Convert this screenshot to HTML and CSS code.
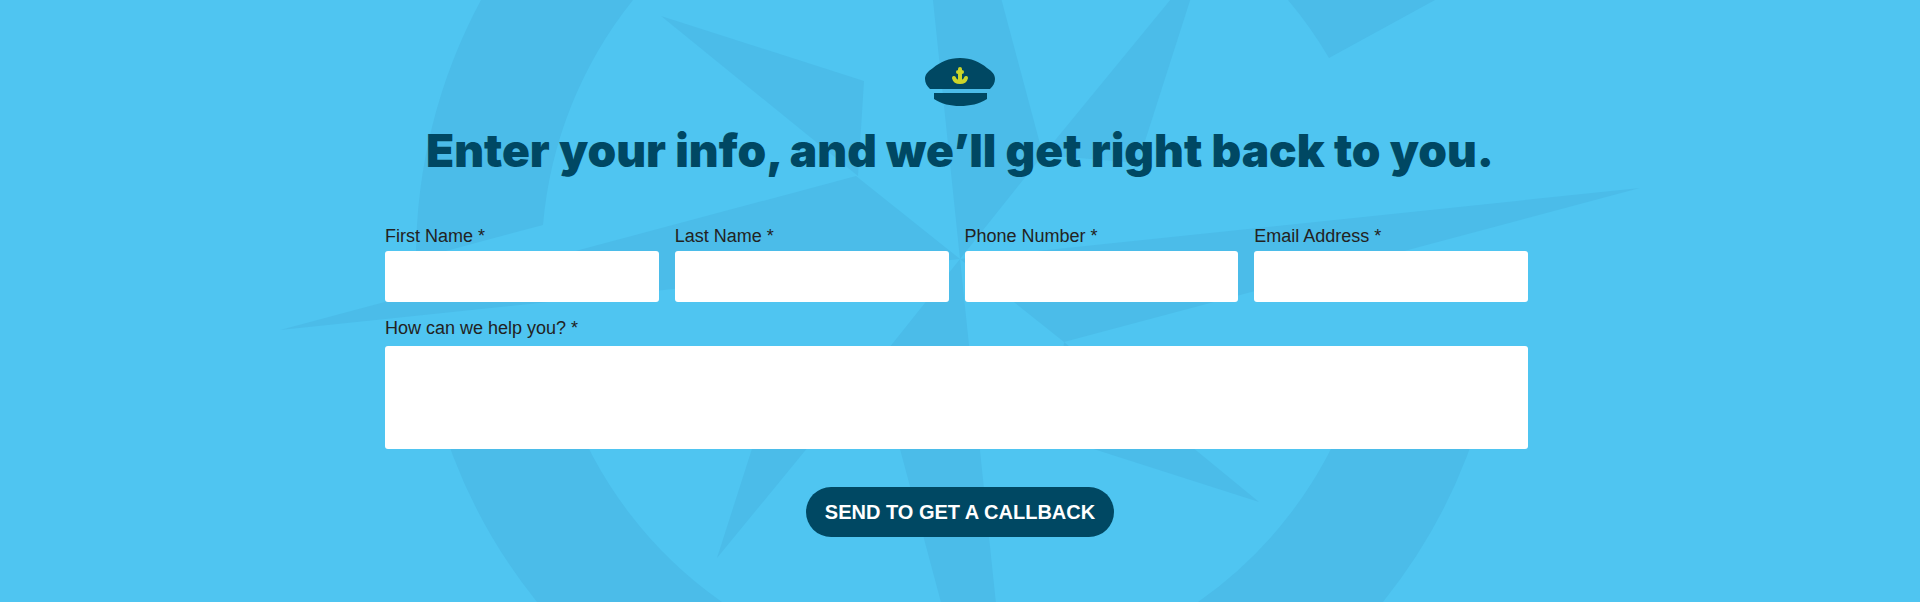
FILE: index.html
```html
<!DOCTYPE html>
<html lang="en">
<head>
<meta charset="utf-8">
<meta name="viewport" content="width=device-width, initial-scale=1">
<title>Request a callback</title>
<link rel="stylesheet" href="styles.css">
</head>
<body>
<main class="callback">
  <svg class="compass" viewBox="0 0 1920 602" preserveAspectRatio="xMidYMid slice" aria-hidden="true">
    <g fill="#4bbce9">
      <!-- ring segments -->
      <path d="M481 0A544 544 0 0 0 416 259L543 225A417 417 0 0 1 633 0Z"/>
      <path d="M1288 0A417 417 0 0 1 1329 58L1435 0Z"/>
      <path d="M435 400A544 544 0 0 0 537 602H722A417 417 0 0 1 568 400Z"/>
      <path d="M1485 400A544 544 0 0 1 1383 602H1198A417 417 0 0 0 1352 400Z"/>
      <!-- main points -->
      <path d="M889-421 1043 155 960 259Z"/>
      <path d="M1640 188 1064 342 960 259Z"/>
      <path d="M1031 939 877 363 960 259Z"/>
      <path d="M280 330 856 176 960 259Z"/>
      <!-- diagonal points -->
      <path d="M661 16 864 81 858 176Z"/>
      <path d="M1203-40 1138 163 1043 155Z"/>
      <path d="M1259 502 1056 437 1064 342Z"/>
      <path d="M717 558 782 355 877 363Z"/>
    </g>
  </svg>

  <div class="content">
    <svg class="hat" viewBox="0 0 70 48" aria-hidden="true">
      <path fill="#004863" d="M35 0C46 0 55 4 62 10C68 14 70 17 70 21C70 25 68 28 65 31H5C2 28 0 25 0 21C0 17 2 14 8 10C15 4 24 0 35 0Z"/>
      <path fill="#004863" d="M9 35H62V41C54 46 45 48 35 48S17 46 9 41Z"/>
      <g fill="none" stroke="#cbd52a" stroke-width="4" stroke-linecap="round" stroke-linejoin="round">
        <path d="M35 11V23M33 14H37"/>
        <path d="M29 20Q30 24 35 24Q40 24 41 20"/>
      </g>
    </svg>
    <h1 class="title">Enter your info, and we’ll get right back to you.</h1>

    <form class="form" id="callback-form">
      <div class="field">
        <label for="first-name">First Name *</label>
        <input id="first-name" type="text" required>
      </div>
      <div class="field">
        <label for="last-name">Last Name *</label>
        <input id="last-name" type="text" required>
      </div>
      <div class="field">
        <label for="phone">Phone Number *</label>
        <input id="phone" type="tel" required>
      </div>
      <div class="field">
        <label for="email">Email Address *</label>
        <input id="email" type="email" required>
      </div>
      <div class="field field-wide">
        <label for="message">How can we help you? *</label>
        <textarea id="message" required></textarea>
      </div>
    </form>
    <button class="submit" type="submit" form="callback-form">SEND TO GET A CALLBACK</button>
  </div>
</main>
</body>
</html>
```
FILE: styles.css
```css
* {
  box-sizing: border-box;
}

body {
  margin: 0;
  font-family: "Liberation Sans", Arial, sans-serif;
  color: #222;
}

.callback {
  position: relative;
  min-height: 100vh;
  padding: 58px 24px 64px;
  background: #4fc5f1;
  overflow: hidden;
}

.compass {
  position: absolute;
  inset: 0;
  width: 100%;
  height: 100%;
}

.content {
  position: relative;
  display: flex;
  flex-direction: column;
  align-items: center;
  max-width: 1150px;
  margin: 0 auto;
}

.hat {
  width: 70px;
  height: 48px;
}

.title {
  margin: 16px 0 46px;
  font-family: Inter, "Open Sans", sans-serif;
  font-size: 46px;
  font-weight: 900;
  line-height: 56px;
  text-align: center;
  color: #004863;
}

.form {
  display: grid;
  grid-template-columns: repeat(4, 1fr);
  gap: 14px 16px;
  width: 100%;
  padding-right: 7px;
}

.field {
  display: flex;
  flex-direction: column;
  gap: 3px;
}

.field-wide {
  grid-column: 1 / -1;
  gap: 6px;
}

.field label {
  font-size: 18px;
  line-height: 24px;
}

.field input,
.field textarea {
  width: 100%;
  height: 51px;
  padding: 8px 12px;
  border: 0;
  border-radius: 3px;
  background: #fff;
  font: inherit;
  resize: none;
}

.field textarea {
  height: 103px;
}

.submit {
  margin-top: 38px;
  padding: 0 19px;
  border: 0;
  border-radius: 25px;
  background: #004863;
  color: #fff;
  font-family: inherit;
  font-size: 20px;
  font-weight: 700;
  line-height: 50px;
}

@media (max-width: 900px) {
  .form {
    grid-template-columns: repeat(2, 1fr);
  }
}
```
